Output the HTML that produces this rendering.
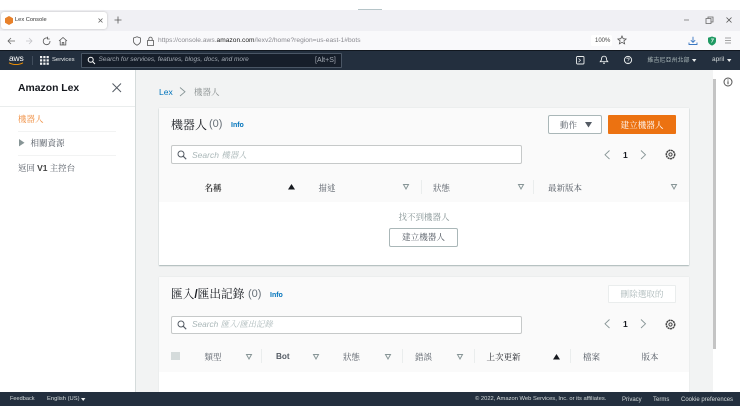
<!DOCTYPE html>
<html lang="zh-Hant"><head><meta charset="utf-8">
<style>
*{box-sizing:border-box}
html,body{margin:0;padding:0;width:740px;height:416px;overflow:hidden;background:#fff}
body{position:relative;font-family:"Liberation Sans","Noto Sans CJK TC",sans-serif;color:#16191f}
.a{position:absolute}
.t{position:absolute;white-space:nowrap;line-height:1}
.cjk{font-family:"Liberation Serif","Noto Serif CJK SC",serif}
svg{position:absolute;overflow:visible}
.box{position:absolute;background:#fff;border:1px solid #c6c9c9;border-radius:2px}
.sep{position:absolute;width:1px;background:#eaeded}
</style></head><body>
<!-- browser chrome -->
<div class="a" style="left:0;top:10px;width:740px;height:21px;background:#f0f0f4"></div>
<div class="a" style="left:358px;top:9px;width:24px;height:1px;background:#b5c4c8"></div>
<div class="a" style="left:1px;top:12px;width:106px;height:17px;background:#fff;border-radius:3px;box-shadow:0 0 2px #bbb"></div>
<svg style="left:4px;top:15px" width="10" height="11"><path d="M5 1l4 2.200v4.600L5 10 1 7.800V3.200z" fill="#e8812a"/></svg>
<div class="t" style="left:15px;top:18px;font-size:5.700px;color:#333">Lex Console</div>
<svg style="left:97px;top:17px" width="7" height="7"><path d="M1.500 1.500l4 4m0-4l-4 4" stroke="#666" stroke-width=".8"/></svg>
<svg style="left:113px;top:15px" width="10" height="10"><path d="M5 1.500v7M1.500 5h7" stroke="#555" stroke-width=".8"/></svg>
<svg style="left:684px;top:15px" width="50" height="10"><path d="M0 5h5" stroke="#777" stroke-width=".8"/><path d="M22 3.500h5v5h-5zM24 3.500v-1.500h5v5h-2" fill="none" stroke="#666" stroke-width=".8"/><path d="M42.500 2.500l5 5m0-5l-5 5" stroke="#555" stroke-width=".8"/></svg>
<div class="a" style="left:0;top:31px;width:740px;height:20px;background:#f9f9fb"></div>
<svg style="left:7px;top:36px" width="60" height="10"><path d="M1 5h7M4 2L1 5l3 3" fill="none" stroke="#666" stroke-width=".8"/><path d="M19 5h6M22 2l3 3-3 3" fill="none" stroke="#c4c4c8" stroke-width=".8"/><path d="M41 2.200A3.400 3.400 0 1 0 43 5M40.500 .8v2.200h2.200" fill="none" stroke="#555" stroke-width=".8"/></svg>
<svg style="left:58px;top:36px" width="10" height="10"><path d="M1 5l4-3.500L9 5M2.200 4.500V9h5.600V4.500M4.200 9V6.500h1.600V9" fill="none" stroke="#555" stroke-width=".8"/></svg>
<svg style="left:132.500px;top:36px" width="24" height="10"><path d="M4 .8l3.500 1.200v3c0 2-1.700 3.400-3.500 4.200C2.200 8.400.5 7 .5 5V2z" fill="none" stroke="#555" stroke-width=".8"/><path d="M14.500 4.500h6v5h-6zM15.800 4.500V2.800a1.700 1.700 0 0 1 3.400 0v1.700" fill="none" stroke="#555" stroke-width=".8"/></svg>
<div class="t" style="left:158px;top:38px;font-size:6.600px;color:#8a8a90;letter-spacing:.03px">https://console.aws.<span style="color:#222">amazon.com</span>/lexv2/home?region=us-east-1#bots</div>
<div class="a" style="left:591px;top:35px;width:21px;height:11px;background:#fff;border-radius:2px"></div>
<div class="t" style="left:595px;top:38px;font-size:6px;color:#444">100%</div>
<svg style="left:617px;top:35px" width="10" height="10"><path d="M5 1l1.200 2.700 2.900.3-2.200 1.900.7 2.900L5 7.300 2.400 8.800l.7-2.900L.9 4l2.900-.3z" fill="none" stroke="#555" stroke-width=".8"/></svg>
<svg style="left:688px;top:36px" width="10" height="10"><path d="M5 .8v5.500M2.800 4.200L5 6.400l2.200-2.200M1 6.500v2h8v-2" fill="none" stroke="#3b78c2" stroke-width=".9"/></svg>
<svg style="left:707px;top:36px" width="10" height="10"><path d="M5 .5l4 1.300v3.200c0 2.300-2 3.800-4 4.600C3 8.800 1 7.300 1 5V1.800z" fill="#1f9a63"/><path d="M4 3h2.500L4.500 6.500" stroke="#fff" stroke-width=".7" fill="none"/></svg>
<svg style="left:725px;top:37px" width="8" height="7"><path d="M0 1h6M0 3.500h6M0 6h6" stroke="#888" stroke-width=".8"/></svg>
<!-- aws nav -->
<div class="a" style="left:0;top:50px;width:740px;height:20px;background:#232f3e;border-top:1px solid #11171f"></div>
<div class="t" style="left:9px;top:54px;font-size:8.500px;color:#fff;letter-spacing:-.2px">aws</div>
<svg style="left:8px;top:62px" width="17" height="4"><path d="M1 .8c4 2.400 10 2.400 14 0" fill="none" stroke="#f90" stroke-width=".9"/></svg>
<div class="a" style="left:32px;top:56px;width:1px;height:9px;background:#414d5c"></div>
<svg style="left:40px;top:56px" width="9" height="9" fill="#f2f3f3"><rect width="2.200" height="2.200"/><rect x="3.300" width="2.200" height="2.200"/><rect x="6.600" width="2.200" height="2.200"/><rect y="3.300" width="2.200" height="2.200"/><rect x="3.300" y="3.300" width="2.200" height="2.200"/><rect x="6.600" y="3.300" width="2.200" height="2.200"/><rect y="6.600" width="2.200" height="2.200"/><rect x="3.300" y="6.600" width="2.200" height="2.200"/><rect x="6.600" y="6.600" width="2.200" height="2.200"/></svg>
<div class="t" style="left:52px;top:58px;font-size:5.900px;color:#eaeded">Services</div>
<div class="a" style="left:81px;top:53px;width:261px;height:15px;background:#161e2a;border:1px solid #4a5665;border-radius:1px"></div>
<svg style="left:87px;top:56px" width="9" height="9"><circle cx="3.700" cy="3.700" r="2.500" fill="none" stroke="#fff" stroke-width="1"/><path d="M5.500 5.500l2.500 2.500" stroke="#fff" stroke-width="1"/></svg>
<div class="t" style="left:98.500px;top:57px;font-size:6.500px;font-style:italic;color:#a4abb4">Search for services, features, blogs, docs, and more</div>
<div class="t" style="left:315px;top:57px;font-size:7px;color:#a4abb4">[Alt+S]</div>
<svg style="left:576px;top:56px" width="9" height="9"><rect x=".5" y=".5" width="7.500" height="7.500" rx="1" fill="none" stroke="#eaeded" stroke-width=".9"/><path d="M2.500 2.500l2 1.800-2 1.800" fill="none" stroke="#eaeded" stroke-width=".7"/></svg>
<svg style="left:599px;top:55px" width="10" height="10"><path d="M5 1.200c-1.800 0-2.500 1.300-2.500 3 0 1.200-.8 1.700-1.300 2.500h7.600C8.300 5.900 7.500 5.400 7.500 4.200c0-1.700-.7-3-2.500-3z" fill="none" stroke="#eaeded" stroke-width=".9"/><path d="M4 8.200h2" stroke="#eaeded" stroke-width="1"/></svg>
<svg style="left:623px;top:55px" width="10" height="10"><circle cx="5" cy="5" r="3.600" fill="none" stroke="#eaeded" stroke-width="1"/><path d="M3.800 4c.2-1.300 2.400-1.300 2.400 0 0 .9-1.200.9-1.200 1.800M5 6.800v.7" fill="none" stroke="#eaeded" stroke-width=".7"/></svg>
<div class="t" style="left:647.500px;top:57.500px;font-size:6px;color:#aab7b8">維吉尼亞州北部</div>
<svg style="left:692px;top:58.500px" width="5" height="4"><path d="M0 0h4.400L2.200 3z" fill="#eaeded"/></svg>
<div class="t" style="left:712px;top:57px;font-size:6.500px;color:#d5dbdb">april</div>
<svg style="left:727px;top:58.500px" width="5" height="4"><path d="M0 0h4.400L2.200 3z" fill="#eaeded"/></svg>
<!-- main area -->
<div class="a" style="left:0;top:70px;width:136px;height:322px;background:#fff;border-right:1px solid #d5dbdb"></div>
<div class="a" style="left:136px;top:70px;width:577px;height:322px;background:#f2f3f3"></div>
<div class="a" style="left:713px;top:79px;width:3px;height:270px;background:#c4c4c4"></div>
<div class="a" style="left:716px;top:70px;width:24px;height:322px;background:#fff"></div>
<svg style="left:723px;top:77px" width="11" height="11"><circle cx="5" cy="5" r="4" fill="none" stroke="#555" stroke-width="1"/><path d="M5 4.300v3M5 2.500v1" stroke="#555" stroke-width="1.100"/></svg>
<!-- sidebar -->
<div class="t" style="left:18px;top:84px;font-size:10.400px;font-weight:bold;color:#16191f">Amazon Lex</div>
<svg style="left:111px;top:82px" width="12" height="12"><path d="M1.500 1.500l8.500 8.500m0-8.500l-8.500 8.500" stroke="#545b64" stroke-width="1"/></svg>
<div class="a" style="left:0;top:106px;width:135px;height:1px;background:#eaeded"></div>
<div class="t cjk" style="left:18px;top:114.500px;font-size:8.500px;color:#ec7211;opacity:.8">機器人</div>
<div class="a" style="left:18px;top:131px;width:98px;height:1px;background:#f2f3f3"></div>
<svg style="left:19px;top:139px" width="6" height="8"><path d="M0 0l5.500 3.700L0 7.400z" fill="#879596"/></svg>
<div class="t cjk" style="left:30.500px;top:139px;font-size:8.500px;color:#545b64">相關資源</div>
<div class="a" style="left:18px;top:155px;width:98px;height:1px;background:#f2f3f3"></div>
<div class="t cjk" style="left:18px;top:164px;font-size:8.500px;color:#545b64">返回 <span style="font-family:'Liberation Sans';font-weight:bold;color:#444">V1</span> 主控台</div>
<!-- breadcrumb -->
<div class="t" style="left:159px;top:88px;font-size:8.500px;color:#0073bb">Lex</div>
<svg style="left:179px;top:87px" width="8" height="10"><path d="M1 .5L6 4.800 1 9" fill="none" stroke="#879596" stroke-width=".9"/></svg>
<div class="t cjk" style="left:194px;top:88px;font-size:8.500px;color:#8a9090">機器人</div>
<!-- panel 1 -->
<div class="a" style="left:159px;top:108px;width:530px;height:157px;background:#fff;box-shadow:0 1px 1px #aab7b8,0 0 1px #d5dbdb"></div>
<div class="a" style="left:159px;top:108px;width:530px;height:94px;background:#fafafa"></div>
<div class="t cjk" style="left:171px;top:119px;font-size:12px;color:#16191f">機器人</div>
<div class="t" style="left:209px;top:119px;font-size:11px;color:#687078">(0)</div>
<div class="t" style="left:231px;top:122px;font-size:7px;font-weight:bold;color:#0073bb">Info</div>
<div class="box" style="left:548px;top:115px;width:54px;height:19px;border-color:#aab7b8;border-radius:2px"></div>
<div class="t cjk" style="left:560px;top:121px;font-size:8.500px;color:#545b64">動作</div>
<svg style="left:584.500px;top:121.500px" width="8" height="6"><path d="M0 0h7L3.500 5.500z" fill="#545b64"/></svg>
<div class="a" style="left:608px;top:115px;width:68px;height:19px;background:#ec7211;border-radius:1px"></div>
<div class="t cjk" style="left:620.500px;top:121px;font-size:8.600px;color:#fff">建立機器人</div>
<div class="box" style="left:171px;top:145px;width:351px;height:19px"></div>
<svg style="left:177px;top:150px" width="10" height="10"><circle cx="4" cy="4" r="3" fill="none" stroke="#545b64" stroke-width="1"/><path d="M6.200 6.200l3 3" stroke="#545b64" stroke-width="1.100"/></svg>
<div class="t" style="left:192px;top:151px;font-size:8.500px;font-style:italic;color:#aab7b8">Search <span class="cjk">機器人</span></div>
<svg style="left:604px;top:150px" width="7" height="10"><path d="M5.500 .5L1 4.800 5.500 9" fill="none" stroke="#879596" stroke-width=".9"/></svg>
<div class="t" style="left:623px;top:150.500px;font-size:8.500px;font-weight:bold;color:#16191f">1</div>
<svg style="left:640px;top:150px" width="7" height="10"><path d="M1 .5L5.500 4.800 1 9" fill="none" stroke="#879596" stroke-width=".9"/></svg>
<svg style="left:665px;top:149px" width="11" height="11"><circle cx="5.500" cy="5.500" r="4.200" fill="none" stroke="#444" stroke-width="1.500" stroke-dasharray="2 .5"/><circle cx="5.500" cy="5.500" r="1.600" fill="none" stroke="#444" stroke-width="1"/></svg>
<div class="t cjk" style="left:204.500px;top:183.500px;font-size:8.500px;font-weight:bold;color:#444">名稱</div>
<svg style="left:288px;top:184px" width="8" height="6"><path d="M0 5.500h7L3.500 0z" fill="#16191f"/></svg>
<div class="t cjk" style="left:318.500px;top:183.500px;font-size:8.500px;color:#545b64">描述</div>
<svg style="left:403px;top:184px" width="7" height="6"><path d="M.5.500h5L3 5z" fill="none" stroke="#879596" stroke-width="1"/></svg>
<div class="sep" style="left:421px;top:180px;height:14px"></div>
<div class="t cjk" style="left:433px;top:183.500px;font-size:8.500px;color:#545b64">狀態</div>
<svg style="left:518px;top:184px" width="7" height="6"><path d="M.5.500h5L3 5z" fill="none" stroke="#879596" stroke-width="1"/></svg>
<div class="sep" style="left:533px;top:180px;height:14px"></div>
<div class="t cjk" style="left:548px;top:183.500px;font-size:8.500px;color:#545b64">最新版本</div>
<svg style="left:671px;top:184px" width="7" height="6"><path d="M.5.500h5L3 5z" fill="none" stroke="#879596" stroke-width="1"/></svg>
<div class="t cjk" style="left:398.500px;top:212.500px;font-size:8.500px;color:#879596">找不到機器人</div>
<div class="box" style="left:389px;top:228px;width:69px;height:19px;border-color:#aab7b8"></div>
<div class="t cjk" style="left:402px;top:233px;font-size:8.600px;color:#545b64">建立機器人</div>
<!-- panel 2 -->
<div class="a" style="left:159px;top:277px;width:530px;height:116px;background:#fff;box-shadow:0 0 1px #d5dbdb"></div>
<div class="a" style="left:159px;top:277px;width:530px;height:95px;background:#fafafa"></div>
<div class="t cjk" style="left:171px;top:289px;font-size:11.700px;color:#16191f">匯入<b style="font-family:'Liberation Sans'">/</b>匯出記錄</div>
<div class="t" style="left:248px;top:289px;font-size:11px;color:#687078">(0)</div>
<div class="t" style="left:270px;top:291.500px;font-size:7px;font-weight:bold;color:#0073bb">Info</div>
<div class="a" style="left:608px;top:285px;width:68px;height:18px;background:#fff;border:1px solid #eaeded;border-radius:1px"></div>
<div class="t cjk" style="left:620.500px;top:290px;font-size:8.600px;color:#aab7b8">刪除選取的</div>
<div class="box" style="left:171px;top:315.500px;width:351px;height:18px"></div>
<svg style="left:177px;top:320px" width="10" height="10"><circle cx="4" cy="4" r="3" fill="none" stroke="#545b64" stroke-width="1"/><path d="M6.200 6.200l3 3" stroke="#545b64" stroke-width="1.100"/></svg>
<div class="t" style="left:192px;top:320px;font-size:8.300px;font-style:italic;color:#aab7b8">Search <span class="cjk">匯入/匯出記錄</span></div>
<svg style="left:604px;top:319px" width="7" height="10"><path d="M5.500 .5L1 4.800 5.500 9" fill="none" stroke="#879596" stroke-width=".9"/></svg>
<div class="t" style="left:623px;top:320px;font-size:8.500px;font-weight:bold;color:#16191f">1</div>
<svg style="left:640px;top:319px" width="7" height="10"><path d="M1 .5L5.500 4.800 1 9" fill="none" stroke="#879596" stroke-width=".9"/></svg>
<svg style="left:665px;top:318.500px" width="11" height="11"><circle cx="5.500" cy="5.500" r="4.200" fill="none" stroke="#444" stroke-width="1.500" stroke-dasharray="2 .5"/><circle cx="5.500" cy="5.500" r="1.600" fill="none" stroke="#444" stroke-width="1"/></svg>
<div class="a" style="left:171px;top:352px;width:9px;height:8px;background:#d5dbdb"></div>
<div class="t cjk" style="left:204.500px;top:353px;font-size:8.500px;color:#545b64">類型</div>
<svg style="left:246px;top:354px" width="7" height="6"><path d="M.5.500h5L3 5z" fill="none" stroke="#879596" stroke-width="1"/></svg>
<div class="sep" style="left:261px;top:349px;height:14px"></div>
<div class="t" style="left:276px;top:353px;font-size:8.200px;font-weight:bold;color:#545b64">Bot</div>
<svg style="left:313px;top:354px" width="7" height="6"><path d="M.5.500h5L3 5z" fill="none" stroke="#879596" stroke-width="1"/></svg>
<div class="t cjk" style="left:343px;top:353px;font-size:8.500px;color:#545b64">狀態</div>
<svg style="left:385px;top:354px" width="7" height="6"><path d="M.5.500h5L3 5z" fill="none" stroke="#879596" stroke-width="1"/></svg>
<div class="sep" style="left:402px;top:349px;height:14px"></div>
<div class="t cjk" style="left:415px;top:353px;font-size:8.500px;color:#545b64">錯誤</div>
<svg style="left:457px;top:354px" width="7" height="6"><path d="M.5.500h5L3 5z" fill="none" stroke="#879596" stroke-width="1"/></svg>
<div class="sep" style="left:474px;top:349px;height:14px"></div>
<div class="t cjk" style="left:486.500px;top:353px;font-size:8.500px;color:#16191f">上次更新</div>
<svg style="left:552.500px;top:354px" width="8" height="6"><path d="M0 5.500h7L3.500 0z" fill="#16191f"/></svg>
<div class="sep" style="left:570px;top:349px;height:14px"></div>
<div class="t cjk" style="left:583px;top:353px;font-size:8.500px;color:#545b64">檔案</div>
<div class="t cjk" style="left:641.500px;top:353px;font-size:8.500px;color:#545b64">版本</div>
<!-- footer -->
<div class="a" style="left:0;top:392px;width:740px;height:14px;background:#232f3e"></div>
<div class="t" style="left:10px;top:396.500px;font-size:5.600px;color:#d5dbdb">Feedback</div>
<div class="t" style="left:47px;top:396.500px;font-size:5.800px;color:#d5dbdb">English (US)</div>
<svg style="left:81px;top:398px" width="5" height="4"><path d="M0 0h4.400L2.200 3z" fill="#eaeded"/></svg>
<div class="t" style="left:475px;top:396.500px;font-size:5.800px;color:#d5dbdb">© 2022, Amazon Web Services, Inc. or its affiliates.</div>
<div class="t" style="left:622px;top:396.500px;font-size:6px;color:#d5dbdb">Privacy</div>
<div class="t" style="left:653px;top:396.500px;font-size:6px;color:#d5dbdb">Terms</div>
<div class="t" style="left:681px;top:396.500px;font-size:6px;color:#d5dbdb">Cookie preferences</div>
</body></html>
